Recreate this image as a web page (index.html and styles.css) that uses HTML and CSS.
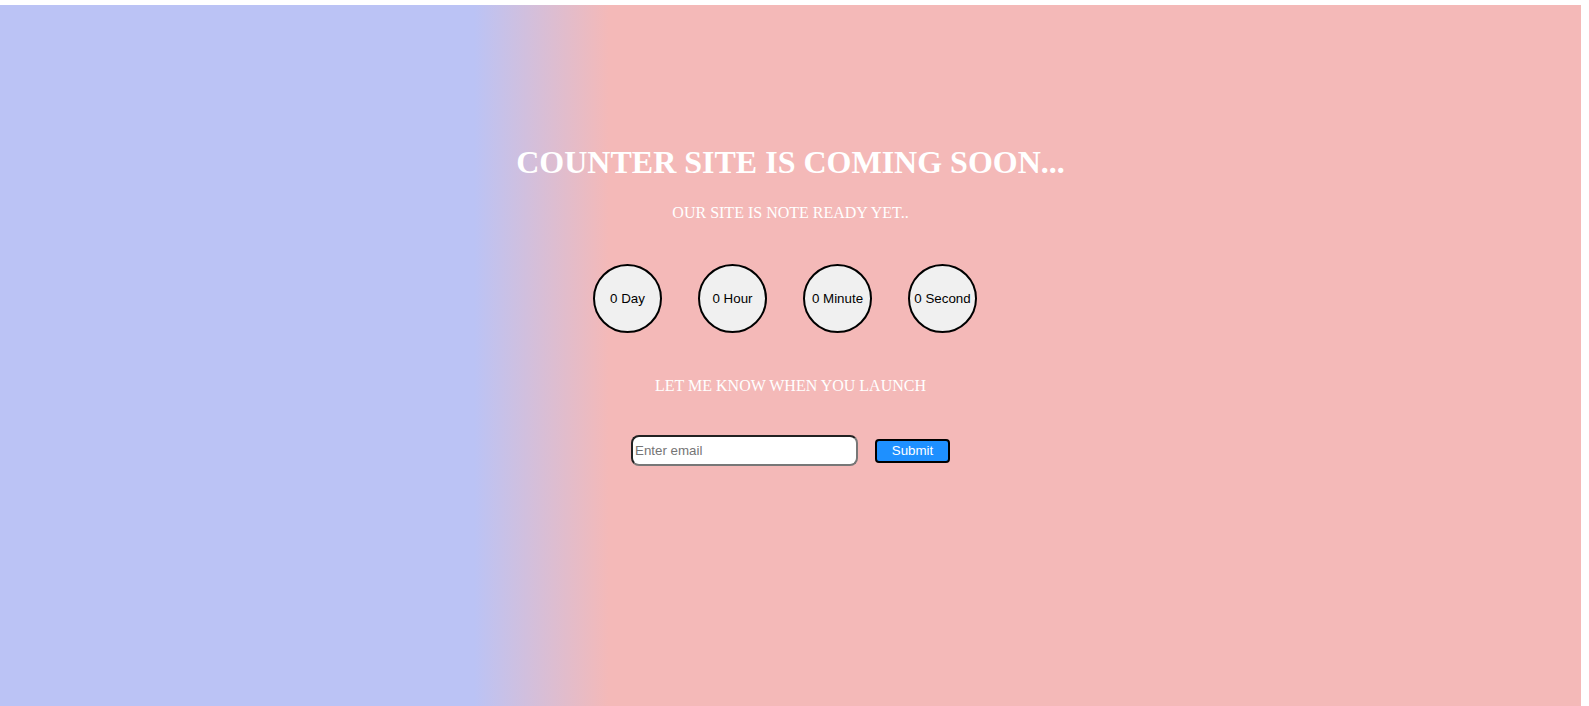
FILE: index.html
```html
<!DOCTYPE html>
<html lang="en">
<head>
<meta charset="utf-8">
<title>Counter site is coming soon</title>
<link rel="stylesheet" href="styles.css">
</head>
<body>
<main class="page">
  <h1 class="title">COUNTER SITE IS COMING SOON...</h1>
  <p class="subtitle">OUR SITE IS NOTE READY YET..</p>
  <div class="timers">
    <div class="circle">0 Day</div>
    <div class="circle">0 Hour</div>
    <div class="circle">0 Minute</div>
    <div class="circle">0 Second</div>
  </div>
  <p class="notify">LET ME KNOW WHEN YOU LAUNCH</p>
  <form class="signup">
    <input class="email" type="email" placeholder="Enter email">
    <button class="submit" type="button">Submit</button>
  </form>
</main>
</body>
</html>
```
FILE: styles.css
```css
html, body {
  margin: 0;
  padding: 0;
  background: #ffffff;
}

.page {
  margin: 5px 8px 0 0;
  min-height: 701px;
  padding-top: 139px;
  box-sizing: border-box;
  background: linear-gradient(to right, #bbc3f5 30%, #f4b9b8 38.5%);
  text-align: center;
  color: #ffffff;
  font-family: "Liberation Serif", "Times New Roman", serif;
}

.title {
  margin: 0;
  font-size: 32px;
  font-weight: 700;
  line-height: 37px;
}

.subtitle {
  margin: 23px 0 0;
  font-size: 16px;
  line-height: 18px;
}

.timers {
  margin-top: 42px;
  display: flex;
  justify-content: center;
  gap: 36px;
  padding-right: 11px;
}

.circle {
  width: 69px;
  height: 69px;
  box-sizing: border-box;
  border: 2px solid #000000;
  border-radius: 50%;
  background: #f0f0f0;
  color: #000000;
  display: flex;
  align-items: center;
  justify-content: center;
  font-family: "Liberation Sans", Arial, sans-serif;
  font-size: 13.33px;
  white-space: nowrap;
}

.notify {
  margin: 44px 0 0;
  font-size: 16px;
  line-height: 18px;
}

.signup {
  margin-top: 40px;
  display: flex;
  justify-content: center;
  align-items: center;
  gap: 17px;
}

.email {
  width: 227px;
  height: 31px;
  box-sizing: border-box;
  padding: 1px 2px;
  border: 2px solid;
  border-color: #222222 #777777 #777777 #222222;
  border-radius: 8px;
  background: #ffffff;
  font-family: "Liberation Sans", Arial, sans-serif;
  font-size: 13.33px;
  color: #000000;
  outline: none;
}

.email::placeholder {
  color: #757575;
}

.submit {
  width: 75px;
  height: 24px;
  box-sizing: border-box;
  padding: 0;
  border: 2px solid #000000;
  border-radius: 4px;
  background: #1e90ff;
  color: #ffffff;
  font-family: "Liberation Sans", Arial, sans-serif;
  font-size: 13.33px;
}
```
